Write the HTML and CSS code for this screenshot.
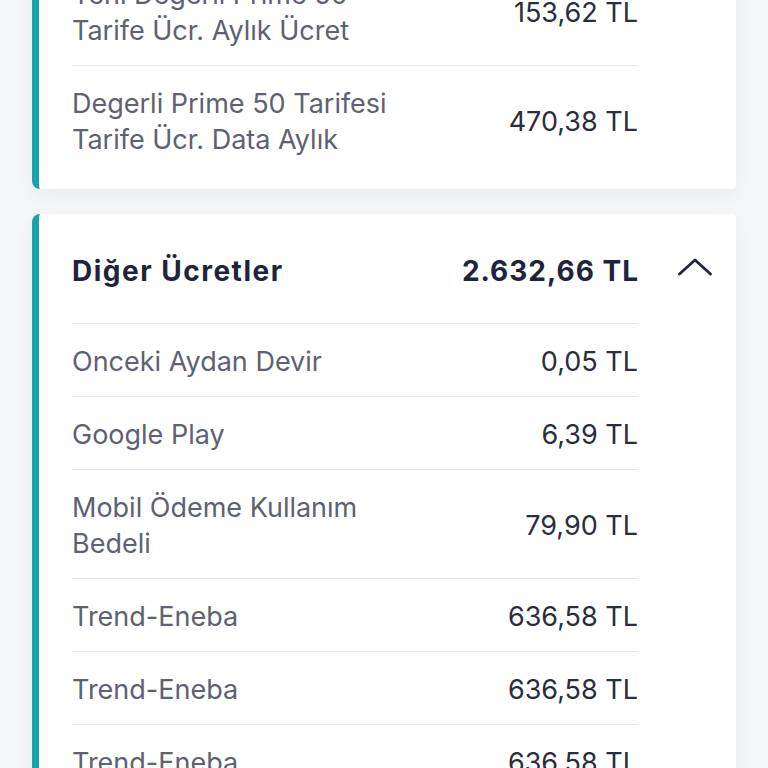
FILE: index.html
```html
<!DOCTYPE html>
<html lang="tr">
<head>
<meta charset="utf-8">
<link rel="stylesheet" href="styles.css">
</head>
<body>
<div class="page">
  <section class="card">
    <div class="row">
      <div class="label">Yeni Degerli Prime 50<br>Tarife Ücr. Aylık Ücret</div>
      <div class="amount">153,62 TL</div>
    </div>
    <div class="row">
      <div class="label">Degerli Prime 50 Tarifesi<br>Tarife Ücr. Data Aylık</div>
      <div class="amount">470,38 TL</div>
    </div>
  </section>
  <section class="card card-open">
    <div class="card-head">
      <div class="head-title">Diğer Ücretler</div>
      <div class="head-amount">2.632,66 TL</div>
      <svg class="chevron" width="34" height="20" viewBox="0 0 34 20"><polyline points="1.5,16 17,2 32.5,16" fill="none" stroke="#22263a" stroke-width="2.8" stroke-linecap="round" stroke-linejoin="round"/></svg>
    </div>
    <div class="row">
      <div class="label">Onceki Aydan Devir</div>
      <div class="amount">0,05 TL</div>
    </div>
    <div class="row">
      <div class="label">Google Play</div>
      <div class="amount">6,39 TL</div>
    </div>
    <div class="row">
      <div class="label">Mobil Ödeme Kullanım<br>Bedeli</div>
      <div class="amount">79,90 TL</div>
    </div>
    <div class="row">
      <div class="label">Trend-Eneba</div>
      <div class="amount">636,58 TL</div>
    </div>
    <div class="row">
      <div class="label">Trend-Eneba</div>
      <div class="amount">636,58 TL</div>
    </div>
    <div class="row">
      <div class="label">Trend-Eneba</div>
      <div class="amount">636,58 TL</div>
    </div>
  </section>
</div>
</body>
</html>
```

FILE: styles.css
```css
html, body {
  margin: 0;
  padding: 0;
  background: #f5f6f8;
  font-family: "Inter", "Open Sans", sans-serif;
}
.page {
  display: flex;
  flex-direction: column;
  gap: 25px;
  padding: 0 32px;
  margin-top: -60px;
}
.card {
  background: #ffffff;
  border-left: 7px solid #1aa2ac;
  border-radius: 8px 4px 4px 8px;
  padding: 17px 98px 15px 33px;
  box-shadow: 0 6px 18px rgba(30, 40, 60, 0.05);
}
.card-open {
  padding-top: 0;
}
.card-head {
  position: relative;
  display: flex;
  align-items: center;
  justify-content: space-between;
  padding: 39px 0 34px;
  line-height: 36px;
  border-bottom: 1px solid #e4e6ea;
}
.head-title {
  font-size: 28px;
  font-weight: 700;
  letter-spacing: 1.5px;
  color: #20243a;
}
.head-amount {
  font-size: 28px;
  font-weight: 700;
  letter-spacing: 1px;
  margin-right: -1px;
  color: #20243a;
}
.chevron {
  position: absolute;
  right: -74px;
  top: 50%;
  margin-top: -11px;
}
.row {
  display: flex;
  align-items: center;
  justify-content: space-between;
  padding: 20px 0 16px;
  line-height: 36px;
  border-bottom: 1px solid #e4e6ea;
}
.card > .row:last-child {
  border-bottom: none;
}
.card-open > .row:last-child {
  border-bottom: 1px solid #e4e6ea;
}
.label {
  font-size: 27px;
  color: #5e6170;
}
.amount {
  font-size: 27px;
  color: #2a2d3b;
  white-space: nowrap;
}
```
